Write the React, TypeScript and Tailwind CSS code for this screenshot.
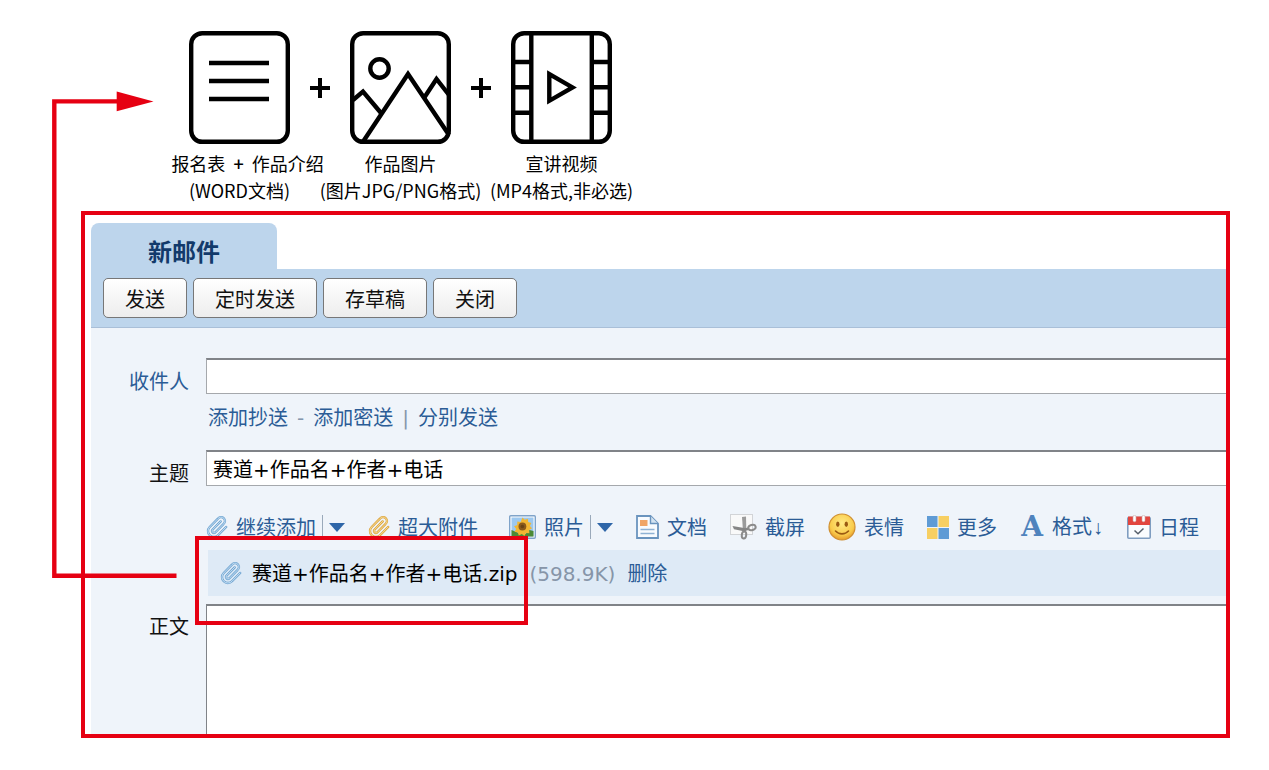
import type { ReactNode } from 'react'

interface Material {
  titulo: ReactNode
  formato: string
  icono: ReactNode
}

function IconoFormulario() {
  return (
    <svg className="h-[113px] w-[101px]" viewBox="0 0 101 113" fill="none" stroke="#000" strokeWidth={4.4}>
      <rect x={2.2} y={2.2} width={96.6} height={108.6} rx={11} />
      <path d="M20 32h60M20 50h60M20 68h60" />
    </svg>
  )
}

function IconoImagen() {
  return (
    <svg className="h-[113px] w-[101px]" viewBox="0 0 101 113" fill="none" stroke="#000" strokeWidth={4.4}>
      <rect x={2.2} y={2.2} width={96.6} height={108.6} rx={11} />
      <circle cx={29.5} cy={37.5} r={9.2} />
      <path d="M13.5 110L58 43l41 61" />
      <path d="M3 69l10-8.5L31 82" />
      <path d="M74 67l12.5-19L99 64" />
    </svg>
  )
}

function IconoVideo() {
  return (
    <svg className="h-[113px] w-[101px]" viewBox="0 0 101 113" fill="none" stroke="#000" strokeWidth={4.4}>
      <rect x={2.2} y={2.2} width={96.6} height={108.6} rx={11} />
      <path d="M20.3 2v109M80.8 2v109" />
      <path d="M2 31h18M2 56.3h18M2 81.7h18M81 31h18M81 56.3h18M81 81.7h18" />
      <path d="M38.3 43v26.8l23.2-13.4z" />
    </svg>
  )
}

function Clip({ claro, oscuro }: { claro: string; oscuro: string }) {
  const trazo = 'm16 6-8.4 8.6a2 2 0 0 0 2.8 2.8l8.4-8.6a4 4 0 1 0-5.6-5.6l-8.4 8.5a6 6 0 1 0 8.5 8.5l8.3-8.5'
  return (
    <svg className="h-[23px] w-[22px] shrink-0" viewBox="1 0.500 22.500 23.500" fill="none" strokeLinecap="round" strokeLinejoin="round">
      <path d={trazo} stroke={oscuro} strokeWidth={2.4} />
      <path d={trazo} stroke={claro} strokeWidth={0.9} />
    </svg>
  )
}

function IconoFoto() {
  return (
    <svg className="h-6 w-[27px] shrink-0" viewBox="0 0 27 24">
      <rect x={0.7} y={0.7} width={25.6} height={22.6} rx={1} fill="#fff" stroke="#7fa3c9" strokeWidth={1.4} />
      <rect x={2.5} y={2.5} width={22} height={19} fill="#9cc8ef" />
      <path d="M2.5 15l5 2 4 2h5l4-4 4 1v5.5h-22z" fill="#4c8a35" />
      <path d="M13.5 2.4l2.2 2.300 3.200-.9.300 3.300 3.200 1-1.500 2.800 2.200 2.400-3 1.700.3 3.300-3.300-.2-1.700 2.900-2.600-2-3 1.600-1-3.200-3.300-.6 1.700-2.900-2.100-2.600 3.100-1.400.1-3.300 3.300.5z" fill="#f2b632" />
      <circle cx={13.4} cy={11.5} r={3.9} fill="#8a5a1c" />
      <circle cx={13.4} cy={11.5} r={1.8} fill="#6b4415" />
    </svg>
  )
}

function IconoDocumento() {
  return (
    <svg className="h-6 w-[23px] shrink-0" viewBox="0 0 23 24" fill="none">
      <path d="M1 1h13.5L22 8.5V23H1z" fill="#f8fbfe" stroke="#6a94be" strokeWidth={1.8} />
      <path d="M14.5 1v7.5H22" fill="#d4e4f2" stroke="#6a94be" strokeWidth={1.4} />
      <rect x={4} y={5} width={7.5} height={6} fill="#f0a566" />
      <path d="M4.5 14.5h14M4.5 18.5h14" stroke="#8fb2d4" strokeWidth={1.4} />
    </svg>
  )
}

function IconoTijeras() {
  return (
    <svg className="h-[26px] w-[27px] shrink-0" viewBox="0 0 27 26" fill="none">
      <rect x={0.5} y={0.5} width={22} height={20} fill="#f9f9f9" stroke="#d2d4d7" />
      <path d="M12 3l4-.5.3 13-3.300 1.500z" fill="#9b9b9b" />
      <path d="M2.500 12l1.500 3.300 11 2.200 2-3z" fill="#868686" />
      <path d="M14 16l5-1.500" stroke="#868686" strokeWidth={2.4} />
      <ellipse cx={22} cy={13.5} rx={3.700} ry={2.600} transform="rotate(-18 22 13.5)" stroke="#8b8b8b" strokeWidth={2} />
      <ellipse cx={14} cy={21} rx={2.200} ry={3.500} transform="rotate(8 14 21)" stroke="#8b8b8b" strokeWidth={2} />
    </svg>
  )
}

function IconoCara() {
  return (
    <svg className="h-7 w-7 shrink-0" viewBox="0 0 28 28" fill="none">
      <defs>
        <radialGradient id="cara" cx="0.5" cy="0.35" r="0.65">
          <stop offset="0" stopColor="#ffea85" />
          <stop offset="0.7" stopColor="#f9cb4b" />
          <stop offset="1" stopColor="#e69a2b" />
        </radialGradient>
      </defs>
      <circle cx={14} cy={14} r={13} fill="url(#cara)" stroke="#cf8f31" strokeWidth={1.2} />
      <ellipse cx={9.8} cy={11.3} rx={1.7} ry={2.7} fill="#9a5a12" />
      <ellipse cx={18.3} cy={11.3} rx={1.7} ry={2.7} fill="#9a5a12" />
      <path d="M7.5 18c3.500 3.800 9.500 3.800 13 0" stroke="#9a5a12" strokeWidth={1.6} strokeLinecap="round" />
    </svg>
  )
}

function IconoMas() {
  return (
    <svg className="h-[23px] w-[22px] shrink-0" viewBox="0 0 22 23">
      <rect width={10.5} height={11} fill="#5f9bd5" />
      <rect x={11.5} width={10.5} height={11} fill="#f7cf62" />
      <rect y={12} width={10.5} height={11} fill="#f7cf62" />
      <rect x={11.5} y={12} width={10.5} height={11} fill="#5f9bd5" />
    </svg>
  )
}

function IconoCalendario() {
  return (
    <svg className="h-6 w-6 shrink-0" viewBox="0 0 24 24" fill="none">
      <rect x={0.8} y={2.5} width={22.4} height={20.7} rx={1} fill="#fafcfe" stroke="#7f9dc0" strokeWidth={1.6} />
      <path d="M1 1.500h22v8.500H1z" fill="#e2463f" />
      <rect x={6} y={0.3} width={3} height={6.5} rx={1.5} fill="#fff" stroke="#c9a6a6" strokeWidth={0.6} />
      <rect x={15} y={0.3} width={3} height={6.5} rx={1.5} fill="#fff" stroke="#c9a6a6" strokeWidth={0.6} />
      <path d="M7.5 15.500l3.500 3.200 5.500-5.200" stroke="#555f6b" strokeWidth={1.5} />
    </svg>
  )
}

function Desplegar({ label }: { label: string }) {
  return (
    <button type="button" aria-label={label} className="ml-[6px] flex h-6 items-center border-l border-[#9aa9ba] pl-[6px]">
      <svg className="h-[9px] w-4" viewBox="0 0 16 9">
        <path d="M0 0h16L8 9z" fill="#2f66a8" />
      </svg>
    </button>
  )
}

const materiales: Material[] = [
  {
    titulo: (
      <span className="flex items-center gap-2 pl-4">
        报名表
        <span className="font-medium">+</span>
        作品介绍
      </span>
    ),
    formato: '(WORD文档)',
    icono: <IconoFormulario />,
  },
  { titulo: '作品图片', formato: '(图片JPG/PNG格式)', icono: <IconoImagen /> },
  { titulo: '宣讲视频', formato: '(MP4格式,非必选)', icono: <IconoVideo /> },
]

const acciones = ['发送', '定时发送', '存草稿', '关闭']

const herramientas: { texto: string; icono: ReactNode; menu?: boolean; flecha?: boolean; clase?: string }[] = [
  { texto: '继续添加', icono: <Clip claro="#d3e8f8" oscuro="#6ea3d0" />, menu: true },
  { texto: '超大附件', icono: <Clip claro="#fbe6a6" oscuro="#dca33c" />, clase: 'pr-2' },
  { texto: '照片', icono: <IconoFoto />, menu: true },
  { texto: '文档', icono: <IconoDocumento /> },
  { texto: '截屏', icono: <IconoTijeras /> },
  { texto: '表情', icono: <IconoCara /> },
  { texto: '更多', icono: <IconoMas /> },
  {
    texto: '格式',
    icono: <span className="w-6 font-['DejaVu_Serif',serif] text-[28px] font-bold text-[#4f83bd]">A</span>,
    flecha: true,
  },
  { texto: '日程', icono: <IconoCalendario /> },
]

function Materiales() {
  return (
    <section className="flex pt-[31px] pb-[7px] pl-[189px] font-['Noto_Sans_CJK_SC',sans-serif] text-[18px] leading-[27px] whitespace-nowrap text-black">
      {materiales.map((m, i) => (
        <div key={m.formato} className="flex">
          {i > 0 && (
            <svg className="mt-[47px] mr-5 ml-5 h-5 w-5" viewBox="0 0 20 20" stroke="#000" strokeWidth={4}>
              <path d="M0 10h20M10 0v20" />
            </svg>
          )}
          <figure className="flex w-[101px] flex-col items-center">
            {m.icono}
            <figcaption className="mt-[6px] flex flex-col items-center">
              <span>{m.titulo}</span>
              <span>{m.formato}</span>
            </figcaption>
          </figure>
        </div>
      ))}
    </section>
  )
}

function Redactar() {
  return (
    <main className="mr-[39px] ml-[81px] overflow-hidden border-4 border-[#e60012] bg-white pt-2 pl-[6px] font-['DejaVu_Sans','Noto_Sans_CJK_SC',sans-serif] text-[20px] leading-[30px] whitespace-nowrap text-[#111]">
      <h1 className="flex h-[46px] w-[186px] items-center justify-center rounded-t-lg bg-[#bdd5ec] pt-[10px] font-['Noto_Sans_CJK_SC',sans-serif] text-[24px] font-bold text-[#123a6b]">
        新邮件
      </h1>
      <div className="flex gap-[6px] border-b border-[#a9bfd8] bg-[#bdd5ec] pt-[9px] pb-[9px] pl-3">
        {acciones.map((a) => (
          <button key={a} className="h-10 rounded-[5px] border border-[#777] bg-linear-to-b from-white to-[#ededed] px-[21px] pt-[3px]">
            {a}
          </button>
        ))}
      </div>

      <form className="grid grid-cols-[98px_minmax(0,1fr)] gap-x-[17px] bg-[#eff4fa] pt-[30px] text-[#2b5c96]">
        <label htmlFor="para" className="pt-[9px] text-right">收件人</label>
        <div>
          <input
            id="para"
            className="block h-9 w-full border border-t-2 border-r-0 border-[#a5a8ac] border-t-[#808388] bg-white px-[6px] text-black"
          />
          <div className="flex h-[56px] items-start gap-[9px] pt-[9px] pl-[2px]">
            <a href="#cc">添加抄送</a>
            <span className="text-[#8497ad]">-</span>
            <a href="#cco">添加密送</a>
            <span className="text-[#8497ad]">|</span>
            <a href="#separado">分别发送</a>
          </div>
        </div>

        <label htmlFor="asunto" className="pt-[9px] text-right text-[#111]">主题</label>
        <div>
          <input
            id="asunto"
            defaultValue="赛道+作品名+作者+电话"
            className="block h-9 w-full border border-t-2 border-r-0 border-[#a5a8ac] border-t-[#808388] bg-white px-[6px] text-black"
          />
          <div className="mt-[18px] flex h-[46px] items-center gap-[23px]">
            {herramientas.map((h) => (
              <div key={h.texto} className={`flex shrink-0 items-center ${h.clase ?? ''}`}>
                <button type="button" className="flex items-center gap-2">
                  {h.icono}
                  <span className="pt-[2px]">
                    {h.texto}
                    {h.flecha && <span className="font-['Liberation_Mono',monospace]">↓</span>}
                  </span>
                </button>
                {h.menu && <Desplegar label={h.texto} />}
              </div>
            ))}
          </div>
          <div className="mb-2 ml-[2px] flex h-[46px] items-center bg-[#deeaf6] pl-3">
            <Clip claro="#d3e8f8" oscuro="#6ea3d0" />
            <span className="ml-[10px] pt-[2px] text-black">赛道+作品名+作者+电话.zip</span>
            <span className="ml-3 pt-[2px] text-[#8695a8]">(598.9K)</span>
            <button type="button" className="ml-3 pt-[2px]">删除</button>
          </div>
        </div>

        <label htmlFor="cuerpo" className="pt-2 text-right text-[#111]">正文</label>
        <textarea
          id="cuerpo"
          className="block h-[130px] w-full resize-none border border-t-2 border-r-0 border-b-0 border-[#808388] bg-white px-[6px] text-black"
        />
      </form>
    </main>
  )
}

export default function App() {
  return (
    <div className="relative min-h-screen overflow-hidden bg-white">
      <Materiales />
      <Redactar />

      {/* Recuadro del adjunto y flecha hacia los materiales */}
      <div className="pointer-events-none absolute top-[536px] left-[195px] h-[89px] w-[333px] border-4 border-[#e60012]" />
      <svg className="pointer-events-none absolute top-[90px] left-[50px] h-[490px] w-[130px]" viewBox="0 0 130 490" fill="none">
        <path d="M126.5 485.8H4.3V11.4H70" stroke="#e60012" strokeWidth={4.4} />
        <path d="M66.7 1.5L103.5 11.4 66.7 21.3z" fill="#e60012" />
      </svg>
    </div>
  )
}
